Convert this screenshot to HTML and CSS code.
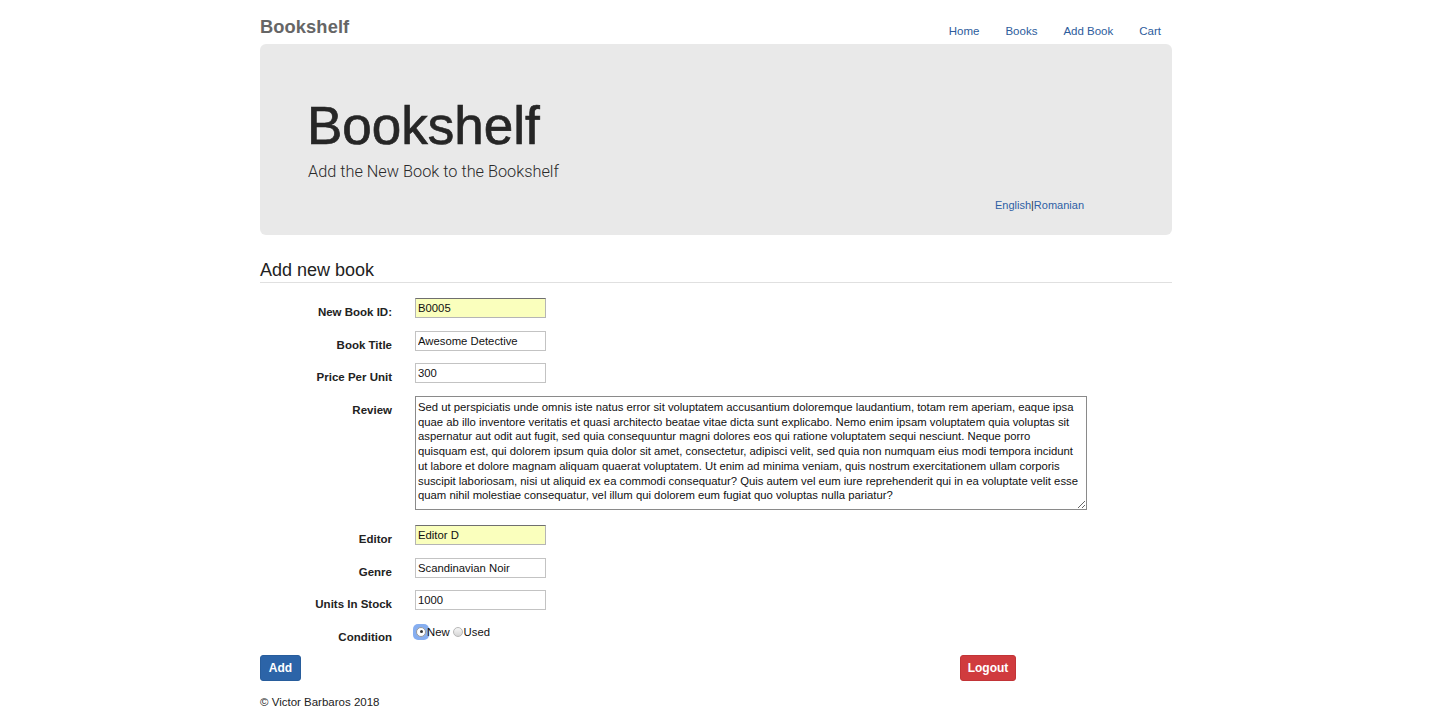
FILE: index.html
```html
<!DOCTYPE html>
<html lang="en">
<head>
<meta charset="utf-8">
<title>Add Book</title>
<link rel="stylesheet" href="styles.css">
</head>
<body>
<div class="container">
  <header class="navbar">
    <a class="brand" href="#">Bookshelf</a>
    <nav class="nav">
      <a href="#">Home</a>
      <a href="#">Books</a>
      <a href="#">Add Book</a>
      <a href="#">Cart</a>
    </nav>
  </header>

  <section class="jumbotron">
    <h1>Bookshelf</h1>
    <p class="lead">Add the New Book to the Bookshelf</p>
    <div class="lang"><a href="#">English</a><span class="sep">|</span><a href="#">Romanian</a></div>
  </section>

  <h2 class="section-title">Add new book</h2>

  <form class="book-form">
    <label class="control-label" for="bookId">New Book ID:</label>
    <div class="field"><input id="bookId" class="input autofill" type="text" value="B0005"></div>

    <label class="control-label" for="title">Book Title</label>
    <div class="field"><input id="title" class="input" type="text" value="Awesome Detective"></div>

    <label class="control-label" for="price">Price Per Unit</label>
    <div class="field"><input id="price" class="input" type="text" value="300"></div>

    <label class="control-label" for="review">Review</label>
    <div class="field field-area"><textarea id="review" class="textarea">Sed ut perspiciatis unde omnis iste natus error sit voluptatem accusantium doloremque laudantium, totam rem aperiam, eaque ipsa
quae ab illo inventore veritatis et quasi architecto beatae vitae dicta sunt explicabo. Nemo enim ipsam voluptatem quia voluptas sit
aspernatur aut odit aut fugit, sed quia consequuntur magni dolores eos qui ratione voluptatem sequi nesciunt. Neque porro
quisquam est, qui dolorem ipsum quia dolor sit amet, consectetur, adipisci velit, sed quia non numquam eius modi tempora incidunt
ut labore et dolore magnam aliquam quaerat voluptatem. Ut enim ad minima veniam, quis nostrum exercitationem ullam corporis
suscipit laboriosam, nisi ut aliquid ex ea commodi consequatur? Quis autem vel eum iure reprehenderit qui in ea voluptate velit esse
quam nihil molestiae consequatur, vel illum qui dolorem eum fugiat quo voluptas nulla pariatur?</textarea></div>

    <label class="control-label" for="editor">Editor</label>
    <div class="field"><input id="editor" class="input autofill" type="text" value="Editor D"></div>

    <label class="control-label" for="genre">Genre</label>
    <div class="field"><input id="genre" class="input" type="text" value="Scandinavian Noir"></div>

    <label class="control-label" for="units">Units In Stock</label>
    <div class="field"><input id="units" class="input" type="text" value="1000"></div>

    <span class="control-label">Condition</span>
    <div class="field radios">
      <span class="radio-wrap focused"><span class="radio checked"></span></span><span class="radio-text">New</span>
      <span class="radio-wrap"><span class="radio"></span></span><span class="radio-text">Used</span>
    </div>

    <div class="actions">
      <button type="button" class="btn btn-primary">Add</button>
      <button type="button" class="btn btn-danger">Logout</button>
    </div>
  </form>

  <footer class="footer">© Victor Barbaros 2018</footer>
</div>
<div class="bottom-fade"></div>
</body>
</html>
```

FILE: styles.css
```css
* { box-sizing: border-box; }

html, body {
  margin: 0;
  padding: 0;
  background: #fff;
}

body {
  font-family: "Liberation Sans", Arial, sans-serif;
  color: #222;
  overflow: hidden;
  height: 712px;
  padding-right: 1px;
}

a { text-decoration: none; }

.container {
  width: 912px;
  margin: 0 auto;
}

/* navbar */
.navbar {
  height: 44px;
  display: flex;
  justify-content: space-between;
  align-items: flex-start;
}

.brand {
  padding-top: 17px;
  font-size: 18.3px;
  line-height: 20px;
  font-weight: bold;
  color: #666;
  letter-spacing: 0.1px;
}

.nav {
  display: flex;
  padding-top: 24px;
  padding-right: 11px;
  gap: 26px;
}

.nav a {
  font-size: 11.5px;
  line-height: 14px;
  color: #2d5c9c;
}

/* jumbotron */
.jumbotron {
  background: #e9e9e9;
  border-radius: 6px;
  padding: 52px 48px 23px 47px;
}

.jumbotron h1 {
  margin: 0;
  font-size: 53px;
  line-height: 60px;
  font-weight: normal;
  color: #262626;
  -webkit-text-stroke: 0.7px #262626;
  letter-spacing: 0;
}

.lead {
  margin: 6px 0 0 1px;
  font-family: Roboto, "Liberation Sans", Arial, sans-serif;
  font-size: 16.3px;
  line-height: 20px;
  font-weight: 300;
  color: #2a2a2a;
}

.lang {
  margin-top: 16px;
  text-align: right;
  padding-right: 40px;
  font-size: 11px;
  line-height: 14px;
}

.lang a { color: #2d5fa5; }
.lang .sep { color: #333; }

/* section title */
.section-title {
  margin: 24px 0 0 0;
  padding-bottom: 1px;
  border-bottom: 1px solid #e0e0e0;
  font-size: 18px;
  line-height: 22px;
  font-weight: normal;
  color: #222;
}

/* form */
.book-form {
  margin-top: 15px;
  display: grid;
  grid-template-columns: 132px 1fr;
  column-gap: 23px;
  row-gap: 12.5px;
}

.control-label {
  height: 20px;
  text-align: right;
  font-size: 11.5px;
  line-height: 13px;
  font-weight: bold;
  padding-top: 8px;
  color: #222;
}

.field {
  height: 20px;
}

.field-area {
  height: 117px;
}

.input {
  display: block;
  width: 131px;
  height: 20px;
  margin: 0;
  padding: 0 2px;
  border: 1px solid #c3c3c3;
  font-family: "Liberation Sans", Arial, sans-serif;
  font-size: 11.3px;
  color: #111;
  background: #fff;
  outline: none;
}

.input.autofill {
  background: #faffbd;
  border-color: #6f6f6f #b5b5b5 #b5b5b5 #b5b5b5;
}

.textarea {
  display: block;
  width: 672px;
  height: 114px;
  margin: 0;
  padding: 3.5px 2px 2px 2px;
  border: 1px solid #8a8a8a;
  font-family: "Liberation Sans", Arial, sans-serif;
  font-size: 11.3px;
  line-height: 14.7px;
  color: #111;
  resize: both;
  overflow: hidden;
  white-space: pre-wrap;
}

.radios {
  display: flex;
  align-items: center;
  height: 20px;
  margin-top: -1px;
  font-size: 11.3px;
}

.radio-wrap {
  width: 12px;
  height: 12px;
  display: flex;
  align-items: center;
  justify-content: center;
  border-radius: 3px;
}

.radio-wrap.focused {
  box-shadow: 0 0 0 2px #86aef0;
  background: #86aef0;
}

.radio {
  width: 10px;
  height: 10px;
  border-radius: 50%;
  border: 1px solid #b8b8b8;
  background: linear-gradient(#f6f6f6, #d6d6d6);
  position: relative;
}

.radio.checked {
  background: #fff;
  border-color: #999;
}

.radio.checked::after {
  content: "";
  position: absolute;
  left: 2.5px;
  top: 2.5px;
  width: 3px;
  height: 3px;
  border-radius: 50%;
  background: #333;
}

.radio-text {
  margin-left: 0;
  margin-right: 2px;
  color: #111;
}

.actions {
  grid-column: 1 / -1;
  display: flex;
  justify-content: space-between;
  padding-right: 156px;
}

.btn {
  height: 26px;
  border-radius: 3px;
  border: 1px solid transparent;
  font-family: "Liberation Sans", Arial, sans-serif;
  font-size: 12px;
  font-weight: bold;
  color: #fff;
  padding: 0;
  line-height: 24px;
}

.btn-primary {
  background: #2c64a8;
  border-color: #285d9c;
  width: 41px;
}

.btn-danger {
  background: #d03b3e;
  border-color: #c23437;
  width: 56px;
}

.footer {
  margin-top: 14px;
  font-size: 11.5px;
  line-height: 14px;
  color: #222;
}

.bottom-fade {
  position: fixed;
  left: 0;
  right: 0;
  bottom: 0;
  height: 26px;
  z-index: -1;
  background: linear-gradient(rgba(242,242,242,0), rgba(240,240,240,1));
  pointer-events: none;
}
```
